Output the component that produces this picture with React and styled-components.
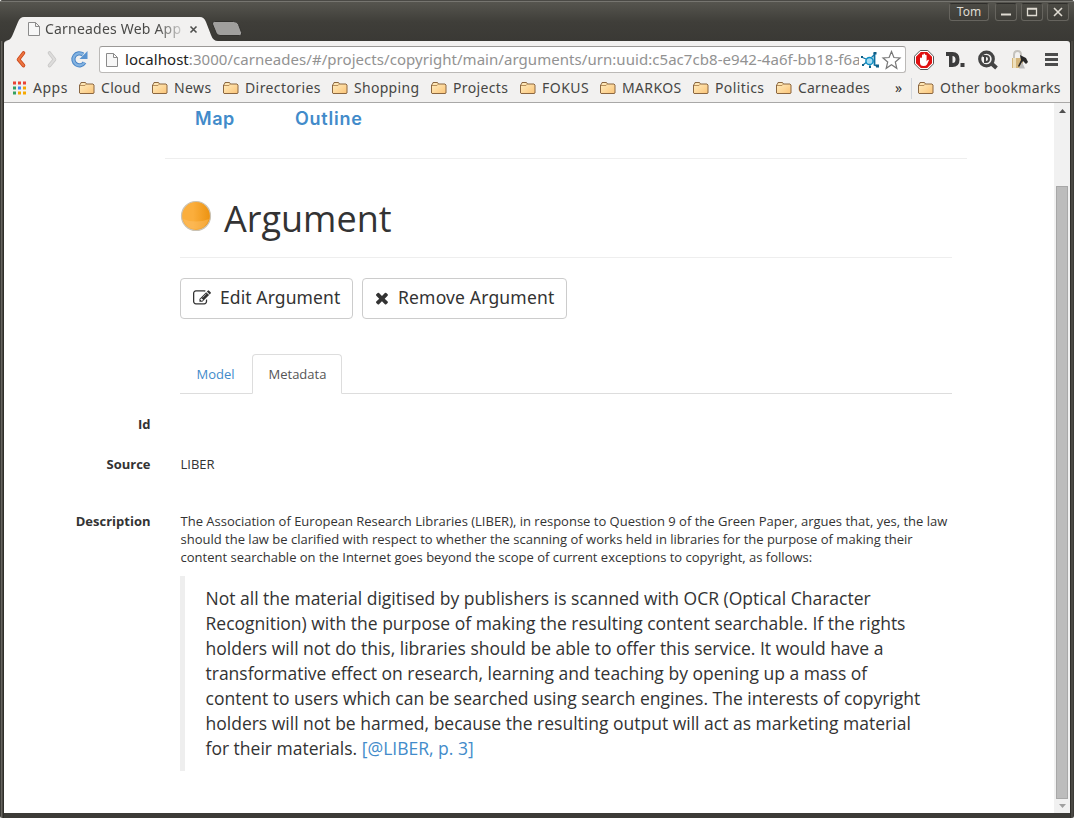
import React from 'react';
import styled, { createGlobalStyle } from 'styled-components';

const Global = createGlobalStyle`
  * { box-sizing: border-box; }
  html, body { margin: 0; padding: 0; overflow: hidden; background: #fff; }
`;

const Window = styled.div`
  width: 1074px;
  height: 818px;
  display: flex;
  flex-direction: column;
  background: linear-gradient(90deg, #3c3b37 0 1px, #66645e 1px 2px, #4a4843 2px 3px, #2f2e2a 3px 4px, #3c3b37 4px 1070px, #2f2e2a 1070px 1071px, #4a4843 1071px 1073px, #3c3b37 1073px);
  border-radius: 3px 3px 2px 2px;
  overflow: hidden;
  font-family: 'Open Sans', sans-serif;
  color: #333;
`;
const TitleBar = styled.header`
  height: 41px;
  flex: none;
  display: flex;
  align-items: flex-end;
  padding-left: 4px;
  background: linear-gradient(#4a4945 0 1px, #767570 1px 2px, #56554f 2px, #3f3e39 22px, #3a3935);
`;
const Tab = styled.div`
  position: relative;
  width: 212px;
  height: 24px;
  display: flex;
  align-items: center;
  padding-left: 23px;
  > svg { position: relative; flex: none; }
  > svg:first-child { position: absolute; left: 0; top: 0; }
`;
const TabTitle = styled.span`
  position: relative;
  width: 138px;
  margin-left: 4px;
  white-space: nowrap;
  overflow: hidden;
  font: 14px/24px 'Noto Sans', sans-serif;
  letter-spacing: 0.2px;
  color: #4a4a48;
  mask-image: linear-gradient(90deg, #000 112px, rgba(0,0,0,.2) 137px);
`;
const TabClose = styled.svg` margin-left: 6px; `;
const NewTab = styled.svg` margin: 0 0 4px -5px; flex: none; `;
const WindowButtons = styled.div`
  align-self: flex-start;
  display: flex;
  margin: 3px 4px 0 auto;
`;
const WindowButton = styled.div`
  width: ${p => p.$w || 22}px;
  height: 18px;
  margin-right: ${p => p.$gap ?? 4}px;
  border: 1px solid #66645e;
  border-top-color: #2e2d2a;
  border-radius: 3px;
  background: linear-gradient(#4b4a44, #3e3d38);
  display: flex;
  align-items: center;
  justify-content: center;
  color: #dfdbd2;
  font: 12px/16px 'Noto Sans', sans-serif;
`;
const Toolbar = styled.div`
  height: 37px;
  flex: none;
  margin: 0 4px;
  background: #f2f1f0;
  border-radius: 3px 3px 0 0;
  display: flex;
  align-items: center;
  padding-left: 8px;
  > svg { flex: none; margin-top: -2px; }
`;
const Address = styled.div`
  width: 807px;
  height: 27px;
  margin-left: 9px;
  border: 1px solid #bbb9b7;
  border-top-color: #9b9997;
  border-radius: 3px;
  background: #fff;
  display: flex;
  align-items: center;
  padding-left: 5px;
  > svg { flex: none; }
`;
const Url = styled.div`
  width: 734px;
  margin: -2px 2px 0 6px;
  overflow: hidden;
  white-space: nowrap;
  font: 15px/24px 'Noto Sans', sans-serif;
  letter-spacing: ${p => p.$ls}px;
  color: #929292;
  b { color: #222; font-weight: 400; }
`;
const Extensions = styled.div`
  display: flex;
  align-items: center;
  margin-left: 8px;
  gap: 11px;
`;
const Bookmarks = styled.nav`
  height: 25px;
  flex: none;
  margin: 0 4px;
  padding-left: 8px;
  background: #f2f1f0;
  border-bottom: 1px solid #a9a8a7;
  display: flex;
  align-items: flex-start;
`;
const Bookmark = styled.div`
  width: ${p => p.$w}px;
  height: 20px;
  flex: none;
  display: flex;
  align-items: center;
  white-space: nowrap;
  font: 14px/20px 'Noto Sans', sans-serif;
  letter-spacing: ${p => p.$ls || 0}px;
  color: #464644;
  > svg { margin-right: 6px; flex: none; }
`;
const More = styled.div`
  width: 25px;
  font: 14px/19px 'Noto Sans', sans-serif;
  color: #333;
  padding-left: 9px;
`;
const Divider = styled.div`
  width: 1px;
  height: 21px;
  margin-right: 6px;
  background: #d2d6dc;
`;
const Viewport = styled.div`
  height: 710px;
  flex: none;
  margin: 0 4px;
  display: flex;
  background: #fff;
`;
const Page = styled.main`
  width: 1050px;
  font-size: 13px;
  line-height: 18px;
`;
const SiteNav = styled.div`
  width: 802px;
  height: 56px;
  margin-left: 161px;
  padding: 4px 0 0 30px;
  border-bottom: 1px solid #eee;
  display: flex;
  font: 600 18px/24px Inter, sans-serif;
  color: #428bca;
`;
const NavLink = styled.span`
  width: 100px;
  letter-spacing: ${p => p.$ls || 0}px;
`;
const Content = styled.div`
  width: 772px;
  margin-left: 176px;
`;
const Heading = styled.h1`
  height: 99px;
  margin: 0 0 20px;
  padding-top: 35px;
  border-bottom: 1px solid #eee;
  display: flex;
  align-items: flex-start;
  font-size: 36px;
  font-weight: 400;
  line-height: 49px;
  svg { margin: 6px 12px 0 0; }
`;
const Actions = styled.div` display: flex; gap: 9px; `;
const Button = styled.div`
  width: ${p => p.$w}px;
  height: 41px;
  border: 1px solid #ccc;
  border-radius: 4px;
  display: flex;
  align-items: center;
  padding: 0 0 3px 12px;
  font: 17.5px/24px 'Noto Sans', sans-serif;
  letter-spacing: ${p => p.$ls || 0}px;
  white-space: nowrap;
  svg { flex: none; margin-right: ${p => p.$gap}px; margin-top: 1px; }
`;
const Tabs = styled.div`
  height: 40px;
  margin-top: 35px;
  display: flex;
  border-bottom: 1px solid #ddd;
`;
const PageTab = styled.div`
  width: ${p => (p.$active ? 90 : 72)}px;
  height: 40px;
  padding: 11px 0 0 ${p => (p.$active ? 15.5 : 16.5)}px;
  color: ${p => (p.$active ? '#555' : '#428bca')};
  ${p => p.$active && 'border: 1px solid #ddd; border-bottom-color: #fff; border-radius: 4px 4px 0 0; padding-top: 10px;'}
`;
const Row = styled.div`
  display: flex;
  margin-top: ${p => p.$top}px;
`;
const Label = styled.div`
  width: 146.500px;
  margin-right: 29.500px;
  text-align: right;
  font-weight: 700;
`;
const Value = styled.div` width: 780px; white-space: nowrap; `;
const Line = styled.div` padding-left: 0.5px; `;
const Quote = styled.blockquote`
  margin: 10px 0 0;
  height: 195px;
  padding: 10px 20.500px;
  border-left: 5px solid #eee;
  font-size: 17.5px;
  line-height: 25px;
  a { color: #428bca; }
`;
const Scrollbar = styled.div`
  width: 16px;
  display: flex;
  flex-direction: column;
  align-items: center;
  background: #f1f1f1;
`;
const Thumb = styled.div`
  width: 12px;
  height: 613px;
  margin: 72px 0 4px 0;
  background: #bcbcbc;
  border: 1px solid #a8a8a8;
`;

const PageIcon = () => (
  <svg width="14" height="16" viewBox="0 0 14 16">
    <path d="M1.5 1.500h7l4 4v9h-11zM8.500 1.500v4h4" fill="#f7f7f7" stroke="#8b8b8b" />
  </svg>
);
const Folder = () => (
  <svg width="16" height="16" viewBox="0 0 16 16">
    <defs><linearGradient id="fold" x2="1" y2="1"><stop stopColor="#ffefc4" /><stop offset="1" stopColor="#fbc477" /></linearGradient></defs>
    <path d="M.5 13V5l1-1 .5-1.500h4.500L7.500 4h6.500l1 1v8l-1 .500H1z" fill="url(#fold)" stroke="#8b6741" />
    <path d="M1 5.500h5L7.500 4" fill="none" stroke="#b88f5c" />
  </svg>
);
const AppsIcon = () => {
  const colors = ['#ea4335', '#ea4335', '#ea4335', '#34a060', '#4285f4', '#f5a800', '#34a060', '#f5a800', '#f5a800'];
  return (
    <svg width="15" height="15" viewBox="0 0 15 15">
      {colors.map((c, i) => <rect key={i} x={1 + (i % 3) * 5} y={0.5 + Math.floor(i / 3) * 5} width="3" height="3" fill={c} />)}
    </svg>
  );
};

const folders = [
  ['Cloud', 73, 0.3], ['News', 71, 0.4], ['Directories', 109, 0.4], ['Shopping', 99, 0.3], ['Projects', 89, 0.35],
  ['FOKUS', 80, 0.5], ['MARKOS', 93, 0.35], ['Politics', 83, 0.4], ['Carneades', 110, 0.2],
];

export default function App() {
  return (
    <>
      <Global />
      <Window>
        <TitleBar>
          <Tab>
            <svg width="218" height="24" viewBox="0 0 218 24"><path d="M0 24c5 0 7-2 9-7l5-12q2-5 6-5h176q4 0 6 5l5 13q2 6 7 6z" fill="#f2f1f0" /></svg>
            <PageIcon />
            <TabTitle>Carneades Web App</TabTitle>
            <TabClose width="9" height="9" viewBox="0 0 9 9"><path d="M1.500 1.500l6 6m0-6l-6 6" stroke="#50504e" strokeWidth="1.600" /></TabClose>
          </Tab>
          <NewTab width="32" height="16" viewBox="0 0 32 16"><path d="M3.500.5h19q4 0 5 3l3 8q1 3-2 3H9q-3 0-4-3L1.500 3Q1 .5 3.500.5z" fill="#a09f9d" stroke="#32312e" /></NewTab>
          <WindowButtons>
            <WindowButton $w={40} $gap={6}>Tom</WindowButton>
            <WindowButton><svg width="12" height="12"><path d="M1 8.500h10" stroke="#dfdbd2" strokeWidth="2" /></svg></WindowButton>
            <WindowButton><svg width="12" height="12"><path d="M1.500 2.500h9v7h-9zM1 3h10" fill="none" stroke="#dfdbd2" strokeWidth="1.300" /></svg></WindowButton>
            <WindowButton $gap={1}><svg width="12" height="12"><path d="M2 2l8 8m0-8l-8 8" stroke="#dfdbd2" strokeWidth="1.600" /></svg></WindowButton>
          </WindowButtons>
        </TitleBar>
        <Toolbar>
          <svg width="20" height="20" viewBox="0 0 20 20"><path d="M11.500 4L6.500 10.500l5 6" fill="none" stroke="#c9471a" strokeWidth="3.600" strokeLinejoin="round" strokeLinecap="round" /><path d="M11.500 4L6.500 10.500l5 6" fill="none" stroke="#ec7440" strokeWidth="2" strokeLinecap="round" /></svg>
          <svg width="30" height="20" viewBox="0 0 30 20"><path d="M17.500 4l5 6.500-5 6" fill="none" stroke="#c9c8c7" strokeWidth="3.600" strokeLinejoin="round" strokeLinecap="round" /><path d="M17.500 4l5 6.500-5 6" fill="none" stroke="#dddcdb" strokeWidth="2" strokeLinecap="round" /></svg>
          <svg width="28" height="20" viewBox="0 0 28 20" ><path d="M22.500 13.500A6 6 0 1 1 21 5.500" fill="none" stroke="#4c86c6" strokeWidth="4.200" /><path d="M25.500 2v8h-8z" fill="#5b94d0" /><path d="M22.500 13.500A6 6 0 1 1 21 5.500" fill="none" stroke="#83b3e1" strokeWidth="2.200" /></svg>
          <Address>
            <PageIcon />
            <Url $ls={0.05}><b>localhost</b>:3000/carneades/#/projects/copyright/main/arguments/urn:uuid:c5ac7cb8-e942-4a6f-bb18-f6a4</Url>
            <svg width="19" height="18" viewBox="0 0 19 18"><path d="M5 8L1.500 6.500M5 11.500L2 14M9 13.500V16M10.500 6.500L13 4" fill="none" stroke="#1479aa" strokeWidth="1.300" /><circle cx="8.500" cy="10" r="3.600" fill="#a6dcf2" stroke="#0d8fc4" strokeWidth="1.500" /><path d="M13.500 2v12l4 1.500" fill="none" stroke="#0d6f9f" strokeWidth="1.800" /><path d="M0 5h2v2H0zM1 13h2v2H1zM8 15h2v2H8zM12.500 1h3v2.500h-3zM15 13.500h3v3h-3z" fill="#0f5f87" /></svg>
            <svg width="22" height="20" viewBox="0 0 22 20"><path d="M11.500 1.500l2.400 6 6.100.5-4.700 4 1.500 6.300-5.300-3.500-5.300 3.500L7.700 12 3 8l6.100-.5z" fill="#fff" stroke="#777" strokeWidth="1.200" /></svg>
          </Address>
          <Extensions>
            <svg width="20" height="20" viewBox="0 0 20 20"><path d="M6.200.5h7.600l5.700 5.700v7.600l-5.700 5.700H6.200L.5 13.800V6.200z" fill="#fff" stroke="#555" /><path d="M6.800 2h6.400L18 6.800v6.400L13.200 18H6.800L2 13.200V6.800z" fill="#df1010" /><path d="M6 8.500q0-1 1-1t1 1V5.300q0-.8.700-.8t.8.800v-1q0-.8.800-.8t.8.800v1q0-.6.700-.6t.8.800v6l1-1.500q.8-.7 1.400 0L13 14.500q-1 1.500-3.500 1.500Q6 16 6 12.500z" fill="#fff" /></svg>
            <svg width="22" height="20" viewBox="0 0 22 20"><path fillRule="evenodd" d="M1 2h6.500Q14.500 2 14.500 9.500T7.500 17H4V6H1zM7.500 6v7q3 0 3-3.500T7.500 6z" fill="#3d3d3d" /><rect x="15.500" y="13" width="4" height="4" fill="#3d3d3d" /></svg>
            <svg width="22" height="20" viewBox="0 0 22 20"><circle cx="8.500" cy="9" r="6.800" fill="#f2f1f0" stroke="#444" strokeWidth="3.200" /><path d="M13.500 13.500l5 4.500" stroke="#444" strokeWidth="4" /><path fillRule="evenodd" d="M4.500 5H8q4 0 4 4t-4 4H6V7H4.500zM8 7v4q2 0 2-2T8 7z" fill="#444" /></svg>
            <svg width="20" height="20" viewBox="0 0 20 20"><path d="M3 9V5q0-4 3.500-4T10 5v4" fill="none" stroke="#c4c2bd" strokeWidth="2" /><path d="M1 8h11v10H1z" fill="#d3b57c" /><path d="M2 8h3v10H2z" fill="#eee0bd" /><path d="M9 5l6 3 2 4-2 2-3-3-4 6-1-1 3-6z" fill="#292929" /><path d="M11 12l-3 6.500h6z" fill="#bbb" /></svg>
            <svg width="22" height="20" viewBox="0 0 22 20"><path d="M3 4.500h13M3 9.500h13M3 14.500h13" stroke="#4c4c4c" strokeWidth="3" /></svg>
          </Extensions>
        </Toolbar>
        <Bookmarks>
          <Bookmark $w={67} $ls={0.5}><AppsIcon />Apps</Bookmark>
          {folders.map(([name, w, ls]) => <Bookmark key={name} $w={w} $ls={ls}><Folder />{name}</Bookmark>)}
          <More>»</More>
          <Divider />
          <Bookmark $w={145} $ls={0.33}><Folder />Other bookmarks</Bookmark>
        </Bookmarks>
        <Viewport>
          <Page>
            <SiteNav><NavLink $ls={0.55}>Map</NavLink><NavLink $ls={0.75}>Outline</NavLink></SiteNav>
            <Content>
              <Heading>
                <svg width="32" height="32" viewBox="0 0 32 32">
                  <defs><linearGradient id="orb"><stop offset=".4" stopColor="#fbae3c" /><stop offset="1" stopColor="#ec920f" /></linearGradient></defs>
                  <circle cx="16" cy="16" r="14.500" fill="url(#orb)" stroke="#cbc3b4" strokeWidth="1.200" />
                  <path d="M3 19q13 5 26 0-3 10-13 10T3 19z" fill="#ffc673" opacity=".4" />
                </svg>
                Argument
              </Heading>
              <Actions>
                <Button $w={173} $gap={9} $ls={0.1}>
                  <svg width="18" height="18" viewBox="0 0 1792 1792"><path fill="#333" d="M888 1184l116-116-152-152-116 116v56h96v96h56zm440-720q-16-16-33 1l-350 350q-17 17-1 33t33-1l350-350q17-17 1-33zm80 594v190q0 119-84.500 203.500t-203.500 84.500h-832q-119 0-203.500-84.500t-84.500-203.500v-832q0-119 84.500-203.500t203.500-84.500h832q63 0 117 25 15 7 18 23 3 17-9 29l-49 49q-14 14-32 8-23-6-45-6h-832q-66 0-113 47t-47 113v832q0 66 47 113t113 47h832q66 0 113-47t47-113v-126q0-13 9-22l64-64q15-15 35-7t20 29zm-96-738l288 288-672 672h-288v-288zm444 132l-92 92-288-288 92-92q28-28 68-28t68 28l152 152q28 28 28 68t-28 68z" /></svg>
                  Edit Argument
                </Button>
                <Button $w={205} $gap={9} $ls={0.17}>
                  <svg width="14" height="18" viewBox="200 0 1400 1792"><path fill="#333" d="M1490 1322q0 40-28 68l-136 136q-28 28-68 28t-68-28l-294-294-294 294q-28 28-68 28t-68-28l-136-136q-28-28-28-68t28-68l294-294-294-294q-28-28-28-68t28-68l136-136q28-28 68-28t68 28l294 294 294-294q28-28 68-28t68 28l136 136q28 28 28 68t-28 68l-294 294 294 294q28 28 28 68z" /></svg>
                  Remove Argument
                </Button>
              </Actions>
              <Tabs><PageTab>Model</PageTab><PageTab $active>Metadata</PageTab></Tabs>
            </Content>
            <Row $top={21}><Label>Id</Label></Row>
            <Row $top={22}><Label>Source</Label><Value><Line>LIBER</Line></Value></Row>
            <Row $top={39}>
              <Label>Description</Label>
              <Value>
                <Line>The Association of European Research Libraries (LIBER), in response to Question 9 of the Green Paper, argues that, yes, the law</Line>
                <Line>should the law be clarified with respect to whether the scanning of works held in libraries for the purpose of making their</Line>
                <Line>content searchable on the Internet goes beyond the scope of current exceptions to copyright, as follows:</Line>
                <Quote>
                  Not all the material digitised by publishers is scanned with OCR (Optical Character<br />
                  Recognition) with the purpose of making the resulting content searchable. If the rights<br />
                  holders will not do this, libraries should be able to offer this service. It would have a<br />
                  transformative effect on research, learning and teaching by opening up a mass of<br />
                  content to users which can be searched using search engines. The interests of copyright<br />
                  holders will not be harmed, because the resulting output will act as marketing material<br />
                  for their materials. <a>[@LIBER, p. 3]</a>
                </Quote>
              </Value>
            </Row>
          </Page>
          <Scrollbar>
            <svg width="9" height="11" viewBox="0 0 9 11"><path d="M1 10l3.500-4L8 10z" fill="#505050" /></svg>
            <Thumb />
            <svg width="9" height="8" viewBox="0 0 9 8"><path d="M1 1l3.500 4L8 1z" fill="#a0a0a0" /></svg>
          </Scrollbar>
        </Viewport>
      </Window>
    </>
  );
}
